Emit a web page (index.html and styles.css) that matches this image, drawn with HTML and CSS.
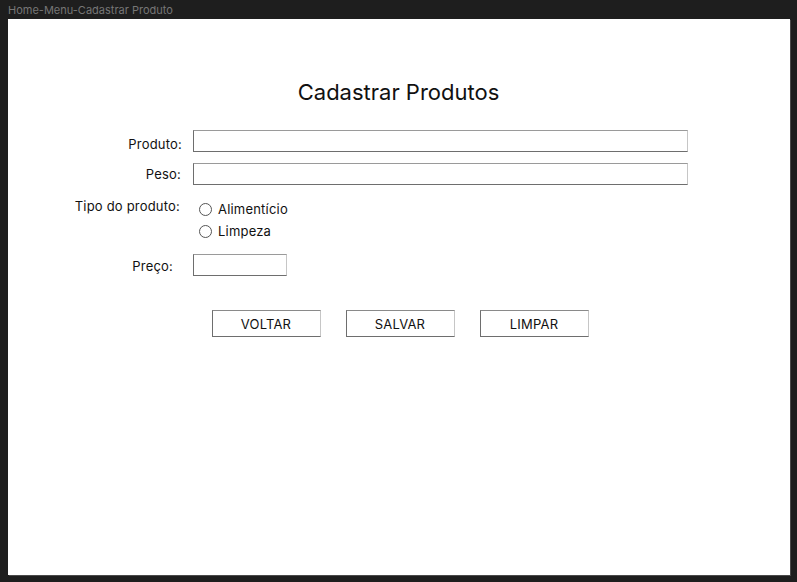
FILE: index.html
```html
<!DOCTYPE html>
<html lang="pt-BR">
<head>
<meta charset="utf-8">
<title>Home-Menu-Cadastrar Produto</title>
<link rel="stylesheet" href="styles.css">
</head>
<body>
<div class="frame-name">Home-Menu-Cadastrar Produto</div>
<main class="frame">
  <h1 class="title">Cadastrar Produtos</h1>
  <form class="form">
    <label class="label label-produto">Produto:</label>
    <div class="field field-produto"><span class="input input-wide"></span></div>

    <label class="label label-peso">Peso:</label>
    <div class="field field-peso"><span class="input input-wide"></span></div>

    <label class="label label-tipo">Tipo do produto:</label>
    <div class="radios">
      <div class="radio-row"><span class="radio"></span><span>Alimentício</span></div>
      <div class="radio-row"><span class="radio"></span><span>Limpeza</span></div>
    </div>

    <label class="label label-preco">Preço:</label>
    <div class="field field-preco"><span class="input input-small"></span></div>
  </form>
  <div class="actions">
    <span class="btn">VOLTAR</span>
    <span class="btn">SALVAR</span>
    <span class="btn">LIMPAR</span>
  </div>
</main>
</body>
</html>
```

FILE: styles.css
```css
* { box-sizing: border-box; }

html, body {
  margin: 0;
  padding: 0;
  background: #1e1e1e;
}

body {
  width: 797px;
  height: 582px;
  overflow: hidden;
  font-family: Inter, "Noto Sans", "Liberation Sans", sans-serif;
  color: #111;
}

.frame-name {
  height: 19px;
  padding-left: 8px;
  padding-top: 3px;
  font-size: 11px;
  line-height: 14px;
  color: #767676;
}

.frame {
  margin-left: 8px;
  width: 782px;
  height: 556px;
  background: #fff;
  box-shadow: 1px 1px 0 #4a4a4a;
  padding-top: 59px;
  display: flex;
  flex-direction: column;
}

.title {
  margin: 0;
  font-size: 22px;
  line-height: 28px;
  font-weight: 400;
  text-align: center;
  color: #111;
  padding-right: 1px;
}

.form {
  margin-top: 24px;
  display: grid;
  grid-template-columns: 174px 495px;
  column-gap: 11px;
  font-size: 13px;
  line-height: 16px;
  letter-spacing: 0.2px;
}

.label {
  text-align: right;
  white-space: nowrap;
}

.label-produto { padding-top: 6px; padding-right: 0; }
.label-peso { margin-top: 11px; padding-top: 3px; padding-right: 1px; }
.label-tipo { margin-top: 13px; padding-top: 0; padding-right: 2px; }
.label-preco { margin-top: 12px; padding-top: 4px; padding-right: 9px; }

.field-peso { margin-top: 11px; }
.field-preco { margin-top: 12px; }

.input {
  display: block;
  height: 22px;
  border: 1px solid #6e6e6e;
  border-top-color: #9a9a9a;
  border-right-color: #c6c6c6;
  background: #fff;
}

.input-wide { width: 495px; }
.input-small { width: 94px; }

.radios {
  margin-top: 13px;
  padding-left: 6px;
  display: flex;
  flex-direction: column;
}

.radio-row {
  display: flex;
  align-items: center;
  gap: 6px;
  height: 22px;
}

.radio {
  width: 13px;
  height: 13px;
  border: 1px solid #555;
  border-radius: 50%;
  flex: none;
}

.actions {
  margin-top: 34px;
  display: flex;
  justify-content: center;
  gap: 25px;
  padding-left: 2px;
}

.btn {
  width: 109px;
  height: 27px;
  border: 1px solid #6e6e6e;
  border-top-color: #8a8a8a;
  border-right-color: #c6c6c6;
  display: flex;
  align-items: center;
  justify-content: center;
  font-size: 13px;
  letter-spacing: 0.2px;
  color: #111;
}
```
